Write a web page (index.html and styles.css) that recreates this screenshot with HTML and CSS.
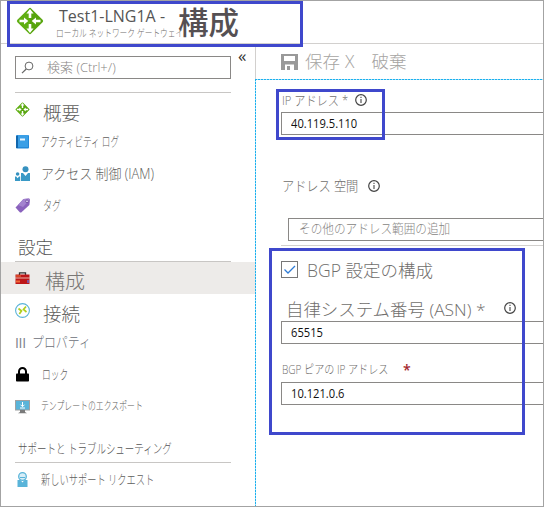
FILE: index.html
```html
<!DOCTYPE html>
<html lang="ja">
<head>
<meta charset="utf-8">
<title>Test1-LNG1A - 構成</title>
<link rel="stylesheet" href="styles.css">
</head>
<body>
<svg width="0" height="0" class="defs">
  <symbol id="gateway" viewBox="0 0 28 28">
    <rect x="4.3" y="4.3" width="19.4" height="19.4" rx="1.6" transform="rotate(45 14 14)" fill="#5fae12"/>
    <path d="M14 0.8 27.2 14 14 27.2z" fill="#458f08" opacity=".3"/>
    <g fill="#fff"><path d="M14 2l3.6 4.4h-2.3V11h-2.6V6.400h-2.300z"/><path d="M14 26l-3.600-4.400h2.300V17h2.600v4.600h2.300z"/><path d="M12.300 14 8 10.400v2.300H3.500v2.600H8v2.300z"/><path d="M15.700 14 20 10.400v2.300h4.500v2.600H20v2.300z"/></g>
  </symbol>
  <symbol id="info" viewBox="0 0 12 12">
    <circle cx="6" cy="6" r="5.300" fill="none" stroke="#444" stroke-width="1.200"/>
    <path d="M6 5v4M6 2.800v1.200" stroke="#555" stroke-width="1.200"/>
  </symbol>
</svg>
<div class="window">
  <header class="header">
    <svg class="logo"><use href="#gateway"/></svg>
    <div class="titles">
      <span class="title">Test1-LNG1A -</span>
      <span class="subtitle">ローカル ネットワーク ゲートウェイ</span>
    </div>
    <span class="page-name">構成</span>
  </header>
  <div class="body">
    <nav class="sidebar">
      <div class="search">
        <svg class="glass" viewBox="0 0 13 13"><circle cx="8" cy="5" r="3.900" fill="none" stroke="#666"/><path d="M5.200 8 1 12.200" stroke="#666" stroke-width="1.200"/></svg>
        <span class="search-text">検索 (Ctrl+/)</span>
        <span class="collapse">«</span>
      </div>
      <div class="rule"></div>
      <div class="item"><svg class="icon"><use href="#gateway"/></svg><span class="label overview">概要</span></div>
      <div class="item"><svg class="icon" viewBox="0 0 15 15"><rect x="1" y="1" width="13" height="13.500" rx="1" fill="#2389d8"/><path d="M1 2h2v12H1z" fill="#1266ac"/><path d="M3 1h10v12H3z" fill="#3a9fe6"/><path d="M5 4.500h5v2H5z" fill="#e8f5ff"/></svg><span class="label log">アクティビティ ログ</span></div>
      <div class="item"><svg class="icon" viewBox="0 0 15 15"><circle cx="10.500" cy="3.200" r="3" fill="#3691bf"/><path d="M6 7h2l2.500 3L13 7h2v8H6z" fill="#3999c6"/><circle cx="2.600" cy="8" r="1.800" fill="#3691bf"/><path d="M0 10.500h1.200l1.400 1.700L4 10.500h1.200V15H0z" fill="#3999c6"/></svg><span class="label iam">アクセス 制御 (IAM)</span></div>
      <div class="item"><svg class="icon" viewBox="0 0 15 15"><path d="M.500 9.500 8.500 1l5.500-.500 1 1-.600 5.500-8.200 7.500h-1.200z" fill="#8a62bd"/><path d="M3 7 8.500 1l5.500-.500 1 1L8 9z" fill="#a382cf"/><circle cx="12" cy="3.300" r="1.400" fill="#d9c8ee" stroke="#68469a" stroke-width=".800"/></svg><span class="label tag">タグ</span></div>
      <h2 class="group"><span class="group-text settings">設定</span></h2>
      <div class="rule"></div>
      <div class="item selected"><svg class="icon" viewBox="0 0 15 15"><path d="M4.500 4V1.800h6V4" fill="none" stroke="#333" stroke-width="1.300"/><path d="M.500 3.500h14V13H.500z" fill="#bd1618"/><path d="M0 6.500h15v1H0z" fill="#e8b5a8"/><path d="M1 9.500h4v2H1z" fill="#f06a38"/><path d="M1 4.500h5v1H1z" fill="#ee7333"/><path d="M12 9h2v3h-2z" fill="#8052a0"/></svg><span class="label config">構成</span></div>
      <div class="item"><svg class="icon" viewBox="0 0 15 15"><circle cx="7.500" cy="7.500" r="6.900" fill="#fff" stroke="#59b4d9" stroke-width="1.100"/><path d="M3.500 5.500 6.500 8l-2.200 3M11 3.500 8.500 6.500 11.500 9" fill="none" stroke="#b0cf20" stroke-width="1.700"/></svg><span class="label connect">接続</span></div>
      <div class="item props"><span class="bars">III</span><span class="label prop">プロパティ</span></div>
      <div class="item"><svg class="icon" viewBox="0 0 15 15"><path d="M4 7V4.500a3.500 3.500 0 0 1 7 0V7" fill="none" stroke="#000" stroke-width="2"/><rect x="1" y="6.500" width="13" height="8" rx=".800"/></svg><span class="label lock">ロック</span></div>
      <div class="item"><svg class="icon" viewBox="0 0 15 15"><rect x=".500" y="1.500" width="14" height="9.500" fill="#59b4d9" stroke="#a0a1a2"/><path d="M5 13V11h5v2l2 1.300H3z" fill="#7a7a7a"/><path d="M7.500 3v4.500M5.500 5.700l2 2 2-2M5 9h5" fill="none" stroke="#fff"/></svg><span class="label export">テンプレートのエクスポート</span></div>
      <h2 class="group"><span class="group-text support">サポートと トラブルシューティング</span></h2>
      <div class="rule"></div>
      <div class="item"><svg class="icon" viewBox="0 0 15 15"><path d="M2.500 8h3l2 2.500L9.500 8h3v7h-10z" fill="#59b4d9"/><circle cx="7.500" cy="4.500" r="3.800" fill="#d8eef8" stroke="#59b4d9" stroke-width="1.300"/><path d="M5 5.500h5" stroke="#59b4d9"/></svg><span class="label request">新しいサポート リクエスト</span></div>
    </nav>
    <main class="main">
      <div class="toolbar">
        <svg class="save" viewBox="0 0 17 16"><path d="M0 0h17v16H0z" fill="#999"/><path d="M3 2h11v5H3zM4 10.500h9V16H4z" fill="#fff"/><path d="M6 12h3v4H6z" fill="#999"/></svg>
        <span class="tool save-text">保存</span><span class="tool cross">X</span><span class="tool discard">破棄</span>
      </div>
      <form class="form">
        <div class="line ip-line"><span class="text ip-label">IP アドレス *</span><svg class="info"><use href="#info"/></svg></div>
        <div class="input"><span class="value ip-value">40.119.5.110</span></div>
        <div class="line space-line"><span class="text space-label">アドレス 空間</span><svg class="info"><use href="#info"/></svg></div>
        <div class="input range"><span class="text placeholder">その他のアドレス範囲の追加</span></div>
        <div class="divider"></div>
        <div class="line bgp-line"><span class="check"><svg viewBox="0 0 15 15"><path d="M2.500 7.500 6 11l7-7" fill="none" stroke="#2f7cd6" stroke-width="1.300"/></svg></span><span class="text bgp-label">BGP 設定の構成</span></div>
        <div class="line asn-line"><span class="text asn-label">自律システム番号 (ASN) *</span><svg class="info"><use href="#info"/></svg></div>
        <div class="input"><span class="value asn-value">65515</span></div>
        <div class="line peer-line"><span class="text peer-label">BGP ピアの IP アドレス</span><span class="required">*</span></div>
        <div class="input"><span class="value peer-value">10.121.0.6</span></div>
      </form>
    </main>
  </div>
  <div class="callout callout-title"></div>
  <div class="callout callout-ip"></div>
  <div class="callout callout-bgp"></div>
</div>
</body>
</html>
```
FILE: styles.css
```css
* { box-sizing: border-box; }
body { margin: 0; background: #fff; font-family: "Open Sans", "Noto Sans CJK JP", sans-serif; font-weight: 300; color: #605e5c; }
.defs { position: absolute; }
svg { display: block; flex: none; }
span { display: block; flex: none; white-space: nowrap; transform-origin: 0 50%; }

.window { position: relative; width: 544px; height: 507px; border: 1px solid #a3a3a3; overflow: hidden; display: flex; flex-direction: column; }
.header { height: 43px; border-bottom: 1px solid #d2d0ce; display: flex; flex: none; }
.logo { width: 28px; height: 28px; margin: 6px 0 0 15px; }
.titles { width: 120px; margin-left: 11px; padding-top: 5px; }
.title { font-size: 16px; line-height: 20px; margin-left: 4px; font-weight: 400; color: #555; }
.subtitle { font-size: 10px; line-height: 14px; margin-left: 1px; color: #706e6c; transform: scaleX(.77); }
.page-name { font-size: 30.5px; line-height: 40px; margin-left: 3px; padding-top: 1px; font-weight: 500; color: #555053; }

.body { display: flex; flex: 1; }
.sidebar { width: 254px; flex: none; }
.search { width: 216px; height: 23px; margin: 12px 0 13px 14px; border: 1px solid #8a8886; display: flex; align-items: center; position: relative; }
.glass { width: 13px; height: 13px; margin-left: 5px; }
.search-text { font-size: 13px; margin: -2px 0 0 13px; color: #878583; transform: scaleX(1); }
.collapse { position: absolute; left: 222px; top: -13px; font-size: 17px; line-height: 24px; font-weight: 400; color: #333; }
.rule { width: 216px; height: 1px; margin-left: 14px; background: #c8c6c4; }
.item { height: 32px; display: flex; align-items: center; padding-left: 14px; }
.icon { width: 15px; height: 15px; margin-right: 11px; }
.label { font-size: 13px; line-height: 20px; }
.selected { background: #edebe9; }
.group { height: 40px; margin: 0; padding: 14px 0 0 17px; font-weight: 300; }
.group-text { line-height: 24px; color: #555; }
.overview { font-size: 18.5px; margin: 8px 0 0 2px; }
.log { transform: scaleX(.66); }
.iam { font-size: 14px; margin-top: 2px; transform: scaleX(.925); }
.tag { margin-left: 2px; transform: scaleX(.7); }
.settings { font-size: 17.500px; }
.config { font-size: 20px; margin: 7px 0 0 4px; color: #797775; }
.connect { font-size: 18.500px; margin: 8px 0 0 2px; }
.bars { font-size: 14px; width: 17px; letter-spacing: -.3px; font-weight: 400; color: #7c8089; }
.prop { font-size: 14px; color: #6c7079; transform: scaleX(.85); }
.lock { margin-left: 1px; transform: scaleX(.67); }
.export { font-size: 11px; transform: scaleX(.715); }
.support { font-size: 13px; transform: scaleX(.73); }
.request { margin-top: -1px; transform: scaleX(.71); }

.main { flex: 1; min-width: 0; }
.toolbar { height: 35px; border-left: 1px solid #d2d0ce; padding-left: 25px; display: flex; align-items: center; }
.save { width: 17px; height: 16px; }
.tool { font-size: 17.500px; line-height: 24px; margin-top: -2px; color: #a6a4a2; }
.save-text { margin-left: 7px; }
.cross { margin-left: 5px; }
.discard { margin-left: 17px; }
.form {
  height: 427px;
  padding: 1px 0 0 26px;
  background:
    repeating-linear-gradient(90deg, #1cb0ee 0 2px, #a9e0f6 2px 3px) 0 0 / 100% 1px no-repeat,
    repeating-linear-gradient(#1cb0ee 0 2px, #a9e0f6 2px 3px) 0 0 / 1px 100% no-repeat;
}
.line { display: flex; align-items: center; }
.text { line-height: 20px; color: #706e6c; }
.info { width: 12px; height: 12px; }
.input { height: 23px; border: 1px solid #8a8886; border-right: 0; display: flex; align-items: center; padding-left: 9px; }
.value { font-size: 12px; font-weight: 400; margin-top: -1px; color: #111; transform: scaleX(.93); }
.ip-line { height: 32px; padding-top: 7px; }
.ip-label { width: 73px; font-size: 13px; margin-left: 1px; transform: scaleX(.86); }
.space-line { height: 83px; padding-top: 18px; }
.space-label { width: 86px; font-size: 14px; margin-left: 1px; transform: scaleX(.87); }
.range { margin-left: 7px; padding-left: 10px; }
.placeholder { font-size: 13px; margin-top: -3px; color: #878583; transform: scaleX(.895); }
.divider { height: 1px; margin-top: 4px; background: #d2d0ce; }
.bgp-line { height: 47px; }
.check { width: 17px; height: 17px; border: 1px solid #777; }
.bgp-label { font-size: 17.500px; margin-left: 9px; }
.asn-line { height: 28px; padding-top: 2px; }
.asn-label { width: 218px; font-size: 17px; margin: 4px 0 0 5px; transform: scaleX(1.025); }
.peer-line { height: 38px; padding-top: 13px; }
.peer-label { width: 121px; font-size: 12px; margin-left: 1px; transform: scaleX(.84); }
.required { color: #a4262c; font-size: 14px; font-weight: 600; line-height: 20px; }

.callout { position: absolute; border: 3px solid #3f48cc; }
.callout-title { left: 6px; top: 0; width: 296px; height: 46px; }
.callout-ip { left: 275px; top: 88px; width: 109px; height: 51px; }
.callout-bgp { left: 268px; top: 247px; width: 256px; height: 187px; }
```
